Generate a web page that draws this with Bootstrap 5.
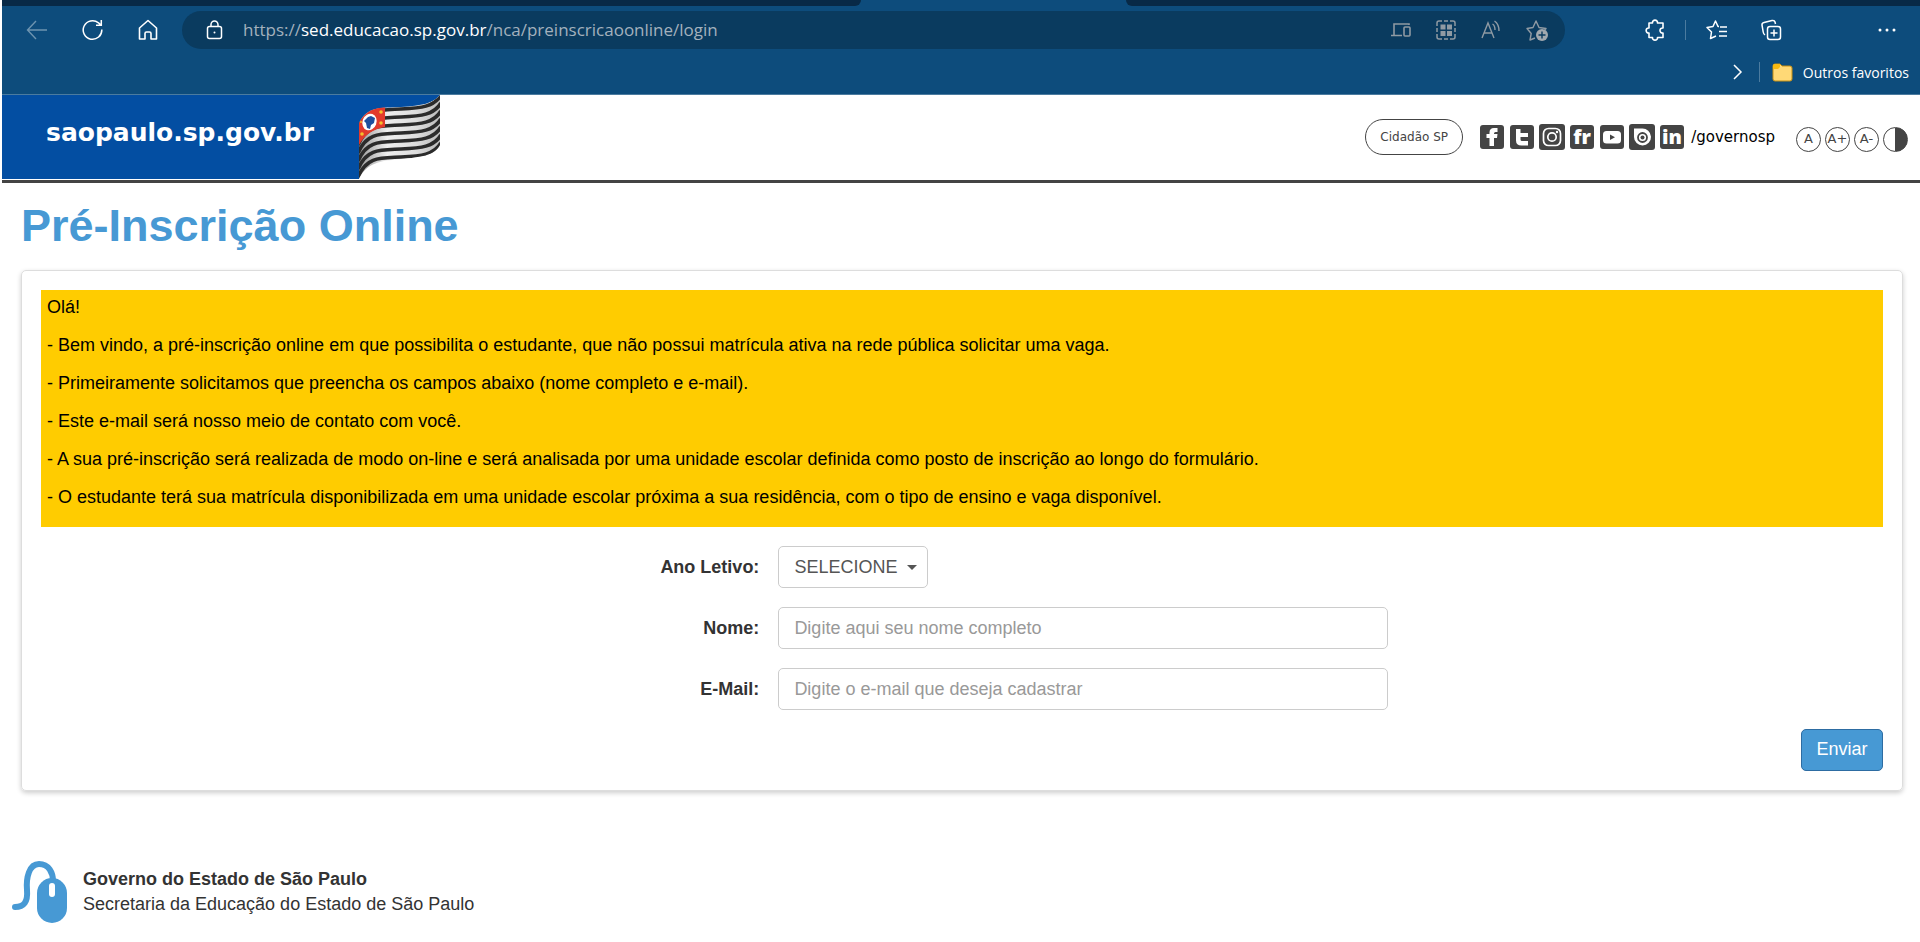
<!DOCTYPE html>
<html lang="pt-BR">
<head>
<meta charset="utf-8">
<meta name="viewport" content="width=device-width, initial-scale=1">
<title>Pré-Inscrição Online</title>
<link href="https://cdn.jsdelivr.net/npm/bootstrap@5.3.0/dist/css/bootstrap.min.css" rel="stylesheet">
<style>
body{font-family:"Liberation Sans",Arial,sans-serif;font-size:18px;line-height:25px;color:#333;background:#fff;padding-left:2px}
svg{display:block;flex:none}
.browser{background:#0d4c7c;color:#fff;font-family:"Open Sans","Noto Sans",sans-serif;border-bottom:1px solid #4b7b9f}
.tabstrip{height:6px}
.tab-left{background:#082946;width:44.8%;border-bottom-right-radius:6px}
.tab-right{background:#082946;width:41.4%;border-bottom-left-radius:6px}
.toolbar{padding:5px 24px 5px 24px}
.icon-btn{border:0;background:none;padding:0;color:#fff}
.nav-btns{gap:35px;margin-right:24px}
.address{background:#0a3b5f;border-radius:19px;height:38px;padding:0 17px 0 24px;color:#8fa0ae}
.url-text{font-size:17px;line-height:24px;color:#a3b1bd;margin-left:20px;white-space:nowrap}
.url-text b{font-weight:400;color:#fff}
.page-tools{gap:25px}
.ext-tools{margin-left:80px;gap:20px}
.sep{width:1px;height:20px;background:#4b7b9f}
.favorites{height:40px;padding:0 11px 4px 0;font-size:14px}
.favorites .sep{margin:0 12px 0 16px}
.favorites a{gap:10px}
.gov{border-bottom:3px solid #444;padding-bottom:1px;font-family:"DejaVu Sans",Verdana,sans-serif}
.gov-brand{background:#034ea2;width:357px;height:84px;padding:0 0 10px 44px;font-size:25px;font-weight:700}
.gov-right{padding-right:12px}
.pill{border:1px solid #444;border-radius:18px;height:36px;width:98px;font-size:12px;color:#444;background:#fff;margin-right:16px;padding:0}
.social{gap:4px}
.handle{font-size:15px;color:#000;margin:0 21px 0 6px}
.access{gap:4px;padding-top:4px}
.round{width:25px;height:25px;border:1px solid #444;border-radius:50%;background:#fff;color:#444;font-size:13px;line-height:22px;padding:0}
.half{background:linear-gradient(90deg,#fff 50%,#444 50%)}
.content{padding:16px 17px 0 19px}
h1.titulo{font-size:45px;line-height:54px;font-weight:700;color:#4799d4;margin:0 0 17px}
.painel{border:1px solid #ddd;border-radius:5px;padding:19px;box-shadow:0 2px 5px rgba(0,0,0,.2)}
.aviso{background:#fc0;color:#000;padding:5px 6px 4px;margin-bottom:19px}
.aviso p{margin:0 0 13px}
.linha{gap:19px;margin-bottom:19px}
.linha label{width:39%;text-align:right;font-weight:700}
.linha .form-control{width:33.1%}
.linha .form-control,.linha .form-select{height:42px;border:1px solid #ccc;border-radius:5px;font-size:18px;line-height:25px;padding:7px 15px;color:#555}
.linha .form-select{width:150px;background-image:url("data:image/svg+xml,%3Csvg xmlns='http://www.w3.org/2000/svg' viewBox='0 0 10 5'%3E%3Cpath d='M0 0h10L5 5z' fill='%23555'/%3E%3C/svg%3E");background-size:10px 5px;background-position:right 10px center}
.linha .form-control::placeholder{color:#999}
.enviar{background:#4799d4;border:1px solid #2d6ca2;border-radius:5px;color:#fff;font-size:18px;line-height:24px;height:42px;width:82px;padding:0 0 2px}
.rodape{padding:70px 0 0 10px;gap:16px}
</style>
</head>
<body>
<div class="browser">
  <div class="tabstrip d-flex justify-content-between"><div class="tab-left"></div><div class="tab-right"></div></div>
  <div class="toolbar d-flex align-items-center">
    <div class="nav-btns d-flex align-items-center">
      <button class="icon-btn" aria-label="Voltar"><svg width="21" height="20" fill="none" stroke="#6d94b0" stroke-width="1.4"><path d="M21 10H2M10 1L1.500 10l8.500 9"/></svg></button>
      <button class="icon-btn" aria-label="Recarregar"><svg width="21" height="22" fill="none" stroke="#fff" stroke-width="1.500"><path d="M19.800 10.500a9.300 9.300 0 1 1-3.300-6.600L19 6M19.300 1v5.300H14"/></svg></button>
      <button class="icon-btn" aria-label="Início"><svg width="20" height="22" fill="none" stroke="#fff" stroke-width="1.600" stroke-linejoin="round"><path d="M1.500 9L10 1.500 18.500 9v11h-5.500v-5.500q0-1.500-1.500-1.500h-3q-1.500 0-1.500 1.500V20H1.500z"/></svg></button>
    </div>
    <div class="address d-flex align-items-center flex-grow-1">
      <svg width="17" height="20" fill="none" stroke="#fff" stroke-width="1.500"><rect x="1.500" y="6.500" width="14" height="12" rx="2"/><path d="M5 6.500V4.500a3.500 3.500 0 0 1 7 0v2"/><circle cx="8.500" cy="12.500" r="1" fill="#fff" stroke="none"/></svg>
      <span class="url-text me-auto">https://<b>sed.educacao.sp.gov.br</b>/nca/preinscricaoonline/login</span>
      <div class="page-tools d-flex align-items-center">
        <svg width="20" height="16" fill="none" stroke="#8f9aa3" stroke-width="1.600"><path d="M18 3V2H3v11M0 13.500h11"/><rect x="13" y="5" width="6" height="9" rx="1"/></svg>
        <svg width="20" height="20" fill="none" stroke="#8f9aa3" stroke-width="1.500"><path d="M1 6V3q0-2 2-2h3M8 1h4M14 1h3q2 0 2 2v3M19 8v4M19 14v3q0 2-2 2h-3M12 19H8M6 19H3q-2 0-2-2v-3M1 12V8"/><path d="M4.500 4.500h5v5h-5zM11 4.500h5v5h-5zM4.500 11h5v5h-5zM11 11h5v5h-5z" fill="#8f9aa3" stroke="none"/></svg>
        <svg width="20" height="20" fill="none" stroke="#8f9aa3" stroke-width="1.400"><path d="M1 18L7 3l6 15M3 13h8M11.500 4q2.500 1.500 2.500 6M13.500 1q4.500 3 4.500 10"/></svg>
        <svg width="22" height="22" fill="none" stroke="#8f9aa3" stroke-width="1.400" stroke-linejoin="round"><path d="M9 19l-5 2 1.200-6.500L1 9.500l6-1L10 2l3 6.500 7 1-1.500 2"/><circle cx="16" cy="16" r="6" fill="#a0a8ae" stroke="none"/><path d="M16 12.500v7M12.500 16h7" stroke="#0a3b5f"/></svg>
      </div>
    </div>
    <div class="ext-tools d-flex align-items-center">
      <button class="icon-btn" aria-label="Extensões"><svg width="20" height="22" fill="none" stroke="#fff" stroke-width="1.600" stroke-linejoin="round"><path d="M4 4h3.500C7 .2 13 .2 12.500 4H18v5c-4-.5-4 5.500 0 5v4.500h-5.500c.5 3.500-5.500 3.500-5 0H4V14C.200 14.500.200 8.500 4 9z"/></svg></button>
      <span class="sep"></span>
      <button class="icon-btn" aria-label="Favoritos"><svg width="22" height="20" fill="none" stroke="#fff" stroke-width="1.500" stroke-linejoin="round"><path d="M13 6.500h-1L9.500 1 7 6.500l-6 1L5.500 12 4.500 18.500 10 16M14 7h7M13 11.500h8M13 16h8"/></svg></button>
      <button class="icon-btn ms-2" aria-label="Coleções"><svg width="28" height="22" viewBox="-5 0 28 22" fill="none" stroke="#fff" stroke-width="1.500" stroke-linejoin="round"><path d="M4 16Q2.500 15 2.200 13L1 6Q.800 4 3 3.500L11 1.500Q13.500 1 14 3l.5 2"/><rect x="6.500" y="7.500" width="13" height="13" rx="2.500"/><path d="M13 10.500v7M9.500 14h7"/></svg></button>
      <button class="icon-btn" aria-label="Mais opções"><svg width="92" height="20"><g fill="#fff"><circle cx="76" cy="10" r="1.500"/><circle cx="83" cy="10" r="1.500"/><circle cx="90" cy="10" r="1.500"/></g></svg></button>
    </div>
  </div>
  <div class="favorites d-flex align-items-center justify-content-end">
    <button class="icon-btn" aria-label="Mostrar mais"><svg width="10" height="16" fill="none" stroke="#fff" stroke-width="1.500"><path d="M1 1l7 7-7 7"/></svg></button>
    <span class="sep"></span>
    <a href="#" class="d-flex align-items-center text-white text-decoration-none">
      <svg width="21" height="19"><path d="M1 3q0-2 2-2h5l2 2h8q2 0 2 2v11q0 2-2 2H3q-2 0-2-2z" fill="#ffd976" stroke="#c78f11"/><path d="M1 3q0-2 2-2h5v3L6 6H1z" fill="#f7b911"/></svg>
      Outros favoritos</a>
  </div>
</div>

<header class="gov d-flex align-items-center">
  <a href="#" class="gov-brand d-flex align-items-center text-white text-decoration-none">saopaulo.sp.gov.br</a>
  <svg width="81" height="84" viewBox="0 0 81 84" aria-label="Bandeira de São Paulo">
    <defs>
      <linearGradient id="brilho"><stop offset="0" stop-color="#999"/><stop offset=".35" stop-color="#eee"/><stop offset=".7" stop-color="#ddd"/><stop offset="1" stop-color="#bbb"/></linearGradient>
      <path id="onda" d="M-1 32C8 11 22 13 42 12S75 10 82 -2"/>
      <clipPath id="pano"><path d="M0 28C8 11 22 13 42 12S75 8 81 0V50C75 61 62 62 42 64S8 67 0 84z"/></clipPath>
      <clipPath id="cantao"><path d="M0 28C7 15 16 13 26 12.500V32Q8 35 0 50z"/></clipPath>
    </defs>
    <path d="M0 0H81C75 8 62 12 42 13S8 12 0 29z" fill="#034ea2"/>
    <g clip-path="url(#pano)">
      <path d="M0 0h81v84H0z" fill="url(#brilho)"/>
      <g fill="none" stroke="#2b2b2b" stroke-width="3.600">
        <use href="#onda" y="2"/><use href="#onda" y="10"/><use href="#onda" y="18"/><use href="#onda" y="26"/><use href="#onda" y="34"/><use href="#onda" y="42"/><use href="#onda" y="50"/>
      </g>
    </g>
    <g clip-path="url(#cantao)">
      <path d="M0 0h26v52H0z" fill="#e23a2c"/>
      <ellipse cx="10.500" cy="27" rx="7" ry="8.500" fill="#fff" transform="rotate(20 10.500 27)"/>
      <path d="M5 26l4-4 3-1 4 2-1 5-3 2-1 4-3-1-1-5z" fill="#1f4f9d"/>
      <g fill="#f5c02c"><circle cx="22" cy="17" r="1.800"/><circle cx="22" cy="28" r="1.800"/><circle cx="3" cy="39" r="1.800"/><circle cx="2" cy="27" r="1"/></g>
    </g>
  </svg>
  <div class="gov-right d-flex align-items-center ms-auto">
    <button class="pill">Cidadão SP</button>
    <div class="social d-flex align-items-center">
      <a href="#" aria-label="Facebook"><svg width="26" height="26"><rect x="1" y="1" width="24" height="24" rx="3" fill="#444"/><path d="M10.500 22v-8H7.500v-4h3V8.500Q10.500 4 15 4h3.500v4H16.500q-1.500 0-1.500 1.500V10h3.500l-.5 4h-3v8z" fill="#fff"/></svg></a>
      <a href="#" aria-label="Twitter"><svg width="26" height="26"><rect x="1" y="1" width="24" height="24" rx="3" fill="#444"/><path d="M7 5h4.500v4H19v4h-7.500v2.500q0 1.500 1.500 1.500h6v4.500h-6.500Q7 21.500 7 16.500z" fill="#fff"/></svg></a>
      <a href="#" aria-label="Instagram"><svg width="26" height="26"><rect width="26" height="26" rx="3" fill="#444"/><g fill="none" stroke="#fff" stroke-width="1.700"><rect x="4.500" y="4.500" width="17" height="17" rx="5"/><circle cx="13" cy="13" r="4.200"/></g><circle cx="18" cy="8" r="1.200" fill="#fff"/></svg></a>
      <a href="#" aria-label="Flickr"><svg width="26" height="26"><rect x="1" y="1" width="24" height="24" rx="3" fill="#444"/><text x="13" y="20" text-anchor="middle" font-family="Open Sans" font-weight="800" font-size="20" fill="#fff">fr</text></svg></a>
      <a href="#" aria-label="YouTube"><svg width="26" height="26"><rect x="1" y="1" width="24" height="24" rx="3" fill="#444"/><rect x="4" y="7" width="18" height="12.500" rx="3.500" fill="#fff"/><path d="M11 10.500v5.500l5-2.750z" fill="#444"/></svg></a>
      <a href="#" aria-label="Issuu"><svg width="26" height="26"><rect width="26" height="26" rx="3" fill="#444"/><path d="M5 4.500h8A8.500 8.500 0 1 1 5 13z" fill="#fff"/><circle cx="13.500" cy="13.500" r="4.500" fill="#fff" stroke="#444" stroke-width="1.800"/><circle cx="13.500" cy="13.500" r="2" fill="#444"/></svg></a>
      <a href="#" aria-label="LinkedIn"><svg width="26" height="26"><rect x="1" y="1" width="24" height="24" rx="3" fill="#444"/><text x="13" y="20" text-anchor="middle" font-family="Open Sans" font-weight="800" font-size="20" fill="#fff">in</text></svg></a>
    </div>
    <span class="handle">/governosp</span>
    <div class="access d-flex align-items-center">
      <button class="round">A</button><button class="round">A+</button><button class="round">A-</button><button class="round half" aria-label="Contraste"></button>
    </div>
  </div>
</header>

<main class="content">
  <h1 class="titulo">Pré-Inscrição Online</h1>
  <form class="painel">
    <div class="aviso">
      <p>Olá!</p>
      <p>- Bem vindo, a pré-inscrição online em que possibilita o estudante, que não possui matrícula ativa na rede pública solicitar uma vaga.</p>
      <p>- Primeiramente solicitamos que preencha os campos abaixo (nome completo e e-mail).</p>
      <p>- Este e-mail será nosso meio de contato com você.</p>
      <p>- A sua pré-inscrição será realizada de modo on-line e será analisada por uma unidade escolar definida como posto de inscrição ao longo do formulário.</p>
      <p>- O estudante terá sua matrícula disponibilizada em uma unidade escolar próxima a sua residência, com o tipo de ensino e vaga disponível.</p>
    </div>
    <div class="linha d-flex align-items-center">
      <label for="ano">Ano Letivo:</label>
      <select class="form-select" id="ano"><option>SELECIONE</option></select>
    </div>
    <div class="linha d-flex align-items-center">
      <label for="nome">Nome:</label>
      <input class="form-control" type="text" id="nome" placeholder="Digite aqui seu nome completo">
    </div>
    <div class="linha d-flex align-items-center">
      <label for="email">E-Mail:</label>
      <input class="form-control" type="email" id="email" placeholder="Digite o e-mail que deseja cadastrar">
    </div>
    <div class="d-flex justify-content-end"><button class="btn enviar" type="submit">Enviar</button></div>
  </form>
</main>

<footer class="rodape d-flex align-items-center">
  <svg width="55" height="62" viewBox="0 0 55 62"><path d="M3 46c9 0 13-5 12-17S17 3 27 3s14 9 14 17" fill="none" stroke="#4799d4" stroke-width="6" stroke-linecap="round"/><rect x="25" y="17" width="30" height="45" rx="15" fill="#4799d4"/><rect x="37" y="22" width="6" height="14" rx="3" fill="#fff"/></svg>
  <div><strong>Governo do Estado de São Paulo</strong><br>Secretaria da Educação do Estado de São Paulo</div>
</footer>
<script src="https://cdn.jsdelivr.net/npm/bootstrap@5.3.0/dist/js/bootstrap.bundle.min.js"></script>
</body>
</html>
